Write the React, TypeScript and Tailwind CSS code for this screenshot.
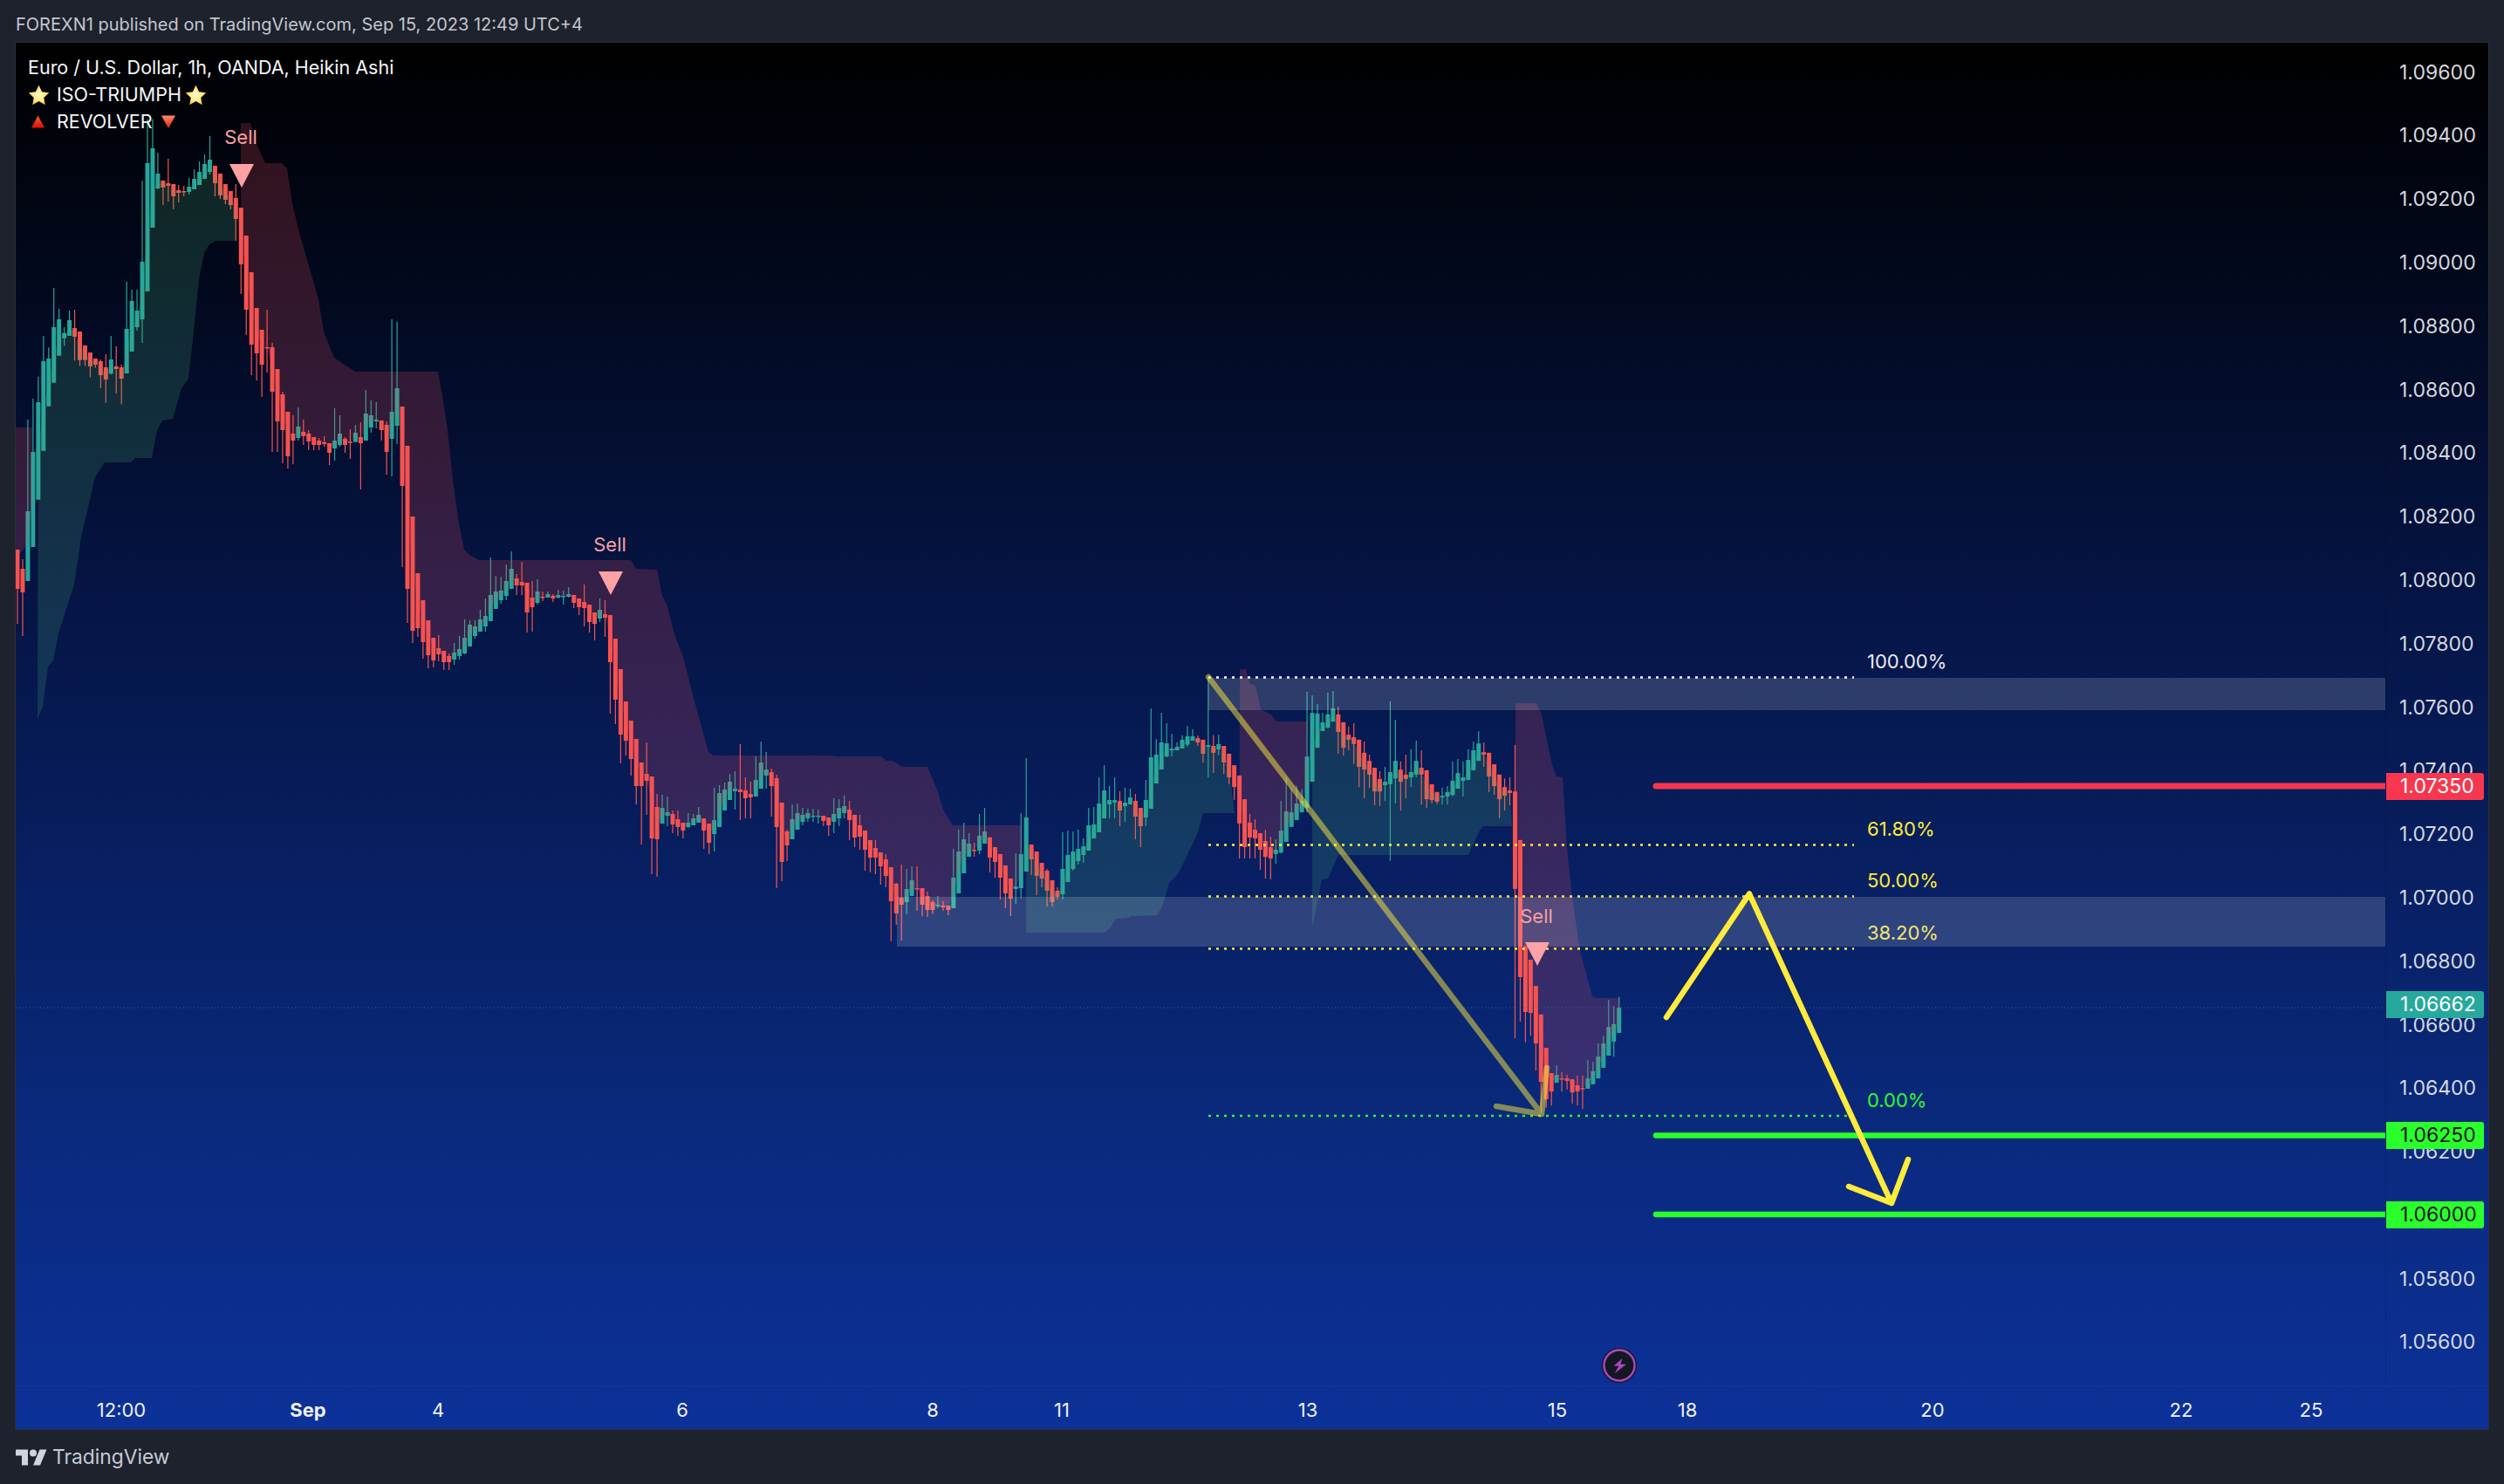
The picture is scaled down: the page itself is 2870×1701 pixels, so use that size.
import React from "react";

type Row = [number, number, number, number, number?];
const seg = (y0: number, s: number, rows: Row[]) =>
  rows.map(([t, b, wt, wb, g]) => ({ t: y0 + t / s, b: y0 + b / s, wt: y0 + wt / s, wb: y0 + wb / s, g: !!g }));

const candles = [
  ...seg(0, 1, [
    [630, 675, 630, 715],
    [652, 679, 641, 729],
    [586, 666, 481, 666, 1],
  ]),
  ...seg(130, 3, [
    [1164, 1491, 981, 1491, 1], [993, 1328, 905, 1328, 1], [852, 1160, 765, 1160, 1], [843, 1007, 805, 1007, 1],
    [735, 926, 600, 926, 1], [708, 833, 672, 833, 1], [755, 773, 735, 800, 1], [711, 765, 678, 765, 1],
    [738, 768, 675, 850], [750, 848, 750, 868], [798, 848, 798, 868], [822, 870, 822, 908],
    [843, 864, 843, 875], [852, 900, 846, 945], [873, 915, 828, 995], [846, 895, 765, 898, 1],
    [870, 879, 801, 963], [873, 912, 864, 1000], [741, 894, 579, 894, 1], [645, 819, 606, 819, 1],
    [678, 735, 606, 747, 1], [510, 708, 231, 789, 1], [171, 612, 20, 612, 1], [120, 393, 20, 393, 1],
    [207, 258, 135, 261, 1], [231, 255, 231, 315], [240, 249, 156, 303], [243, 285, 243, 330],
    [264, 273, 246, 306], [267, 270, 249, 285], [252, 270, 222, 279, 1], [225, 261, 192, 261, 1],
    [201, 246, 165, 246, 1], [174, 225, 141, 225, 1], [159, 201, 78, 210, 1], [180, 240, 180, 285],
    [207, 282, 207, 294], [243, 297, 243, 312], [267, 315, 267, 330], [291, 363, 243, 438],
    [324, 519, 324, 621], [420, 675, 420, 762], [546, 795, 546, 900], [669, 825, 669, 918],
    [744, 864, 744, 975], [804, 807, 675, 891], [804, 957, 789, 1164], [879, 1059, 879, 1164],
    [966, 1089, 957, 1203], [1026, 1179, 1026, 1221], [1101, 1125, 1038, 1206], [1077, 1116, 1011, 1125, 1],
    [1095, 1110, 1053, 1140], [1101, 1128, 1089, 1158], [1113, 1140, 1113, 1158], [1125, 1140, 1116, 1158],
    [1131, 1137, 1110, 1146], [1134, 1167, 1134, 1209], [1125, 1152, 1014, 1194, 1], [1101, 1140, 1038, 1146, 1],
    [1119, 1140, 1113, 1167], [1128, 1133, 1086, 1188],
  ]),
  ...seg(350, 3, [
    [438, 470, 411, 470, 1], [453, 474, 402, 633], [372, 465, 291, 465, 1], [378, 420, 327, 438, 1],
    [393, 399, 333, 423, 1], [396, 429, 396, 465], [411, 504, 399, 582], [366, 459, 48, 588, 1],
    [285, 414, 57, 477, 1], [348, 621, 348, 900], [483, 975, 483, 1092], [726, 1119, 726, 1161],
    [921, 1110, 921, 1140], [1014, 1158, 1014, 1215], [1083, 1203, 1083, 1248], [1143, 1221, 1143, 1245],
    [1179, 1200, 1134, 1224], [1188, 1227, 1188, 1254], [1206, 1227, 1197, 1254], [1194, 1218, 1161, 1236, 1],
    [1182, 1206, 1137, 1218, 1], [1143, 1197, 1080, 1200, 1], [1098, 1173, 1083, 1173, 1], [1104, 1137, 1083, 1146, 1],
    [1080, 1122, 1047, 1122, 1], [1068, 1104, 1008, 1122, 1], [996, 1086, 867, 1086, 1], [984, 1044, 930, 1044, 1],
    [981, 1014, 933, 1026, 1], [948, 999, 891, 1014, 1], [906, 975, 846, 975, 1], [939, 963, 924, 996],
    [951, 963, 882, 996], [954, 1056, 954, 1125], [1005, 1038, 948, 1122], [984, 1023, 942, 1029, 1],
    [1002, 1005, 984, 1017], [993, 1005, 984, 1005, 1], [999, 1008, 993, 1020], [996, 1005, 978, 1008, 1],
    [999, 1002, 981, 1029, 1], [993, 1002, 969, 1005, 1], [996, 1023, 996, 1041], [1008, 1038, 1008, 1065],
    [1020, 1041, 960, 1104], [1029, 1089, 1029, 1125], [1056, 1095, 1056, 1152], [1047, 1077, 1008, 1089, 1],
    [1062, 1074, 1014, 1140],
  ]),
  ...seg(620, 3, [
    [255, 417, 255, 594], [336, 546, 336, 630], [441, 666, 441, 765], [552, 687, 552, 738],
    [618, 750, 618, 807], [681, 843, 681, 906], [762, 843, 762, 1044], [801, 825, 693, 942],
    [810, 1023, 810, 1146], [915, 1026, 870, 1155], [918, 972, 873, 972, 1], [933, 945, 879, 981, 1],
    [939, 975, 927, 1005], [957, 984, 927, 1014], [969, 996, 969, 1023], [969, 984, 936, 987, 1],
    [954, 978, 939, 978, 1], [942, 969, 915, 969, 1], [954, 996, 954, 1059], [972, 1038, 972, 1077],
    [960, 1008, 849, 1068, 1], [867, 984, 840, 984, 1], [855, 927, 831, 927, 1], [828, 891, 801, 891, 1],
    [852, 861, 792, 924, 1], [855, 864, 699, 960], [858, 885, 813, 954], [870, 882, 828, 954],
    [822, 879, 741, 879, 1], [762, 852, 690, 852, 1], [786, 807, 726, 852, 1], [795, 843, 783, 948],
    [816, 984, 804, 1194], [900, 1104, 900, 1170], [999, 1047, 993, 1101], [957, 1026, 906, 1026, 1],
    [936, 993, 903, 993, 1], [942, 966, 918, 978, 1], [936, 954, 921, 966, 1], [945, 948, 921, 966, 1],
    [945, 948, 924, 972, 1], [945, 963, 945, 981], [951, 978, 951, 1014], [939, 966, 885, 1005, 1],
    [918, 954, 888, 981, 1], [912, 936, 876, 954, 1], [924, 960, 894, 1029], [942, 1020, 942, 1053],
    [978, 1017, 942, 1062], [996, 1062, 996, 1134], [1029, 1089, 1029, 1140], [1056, 1089, 1029, 1146],
    [1071, 1119, 1071, 1182], [1095, 1152, 1077, 1191], [1122, 1239, 1122, 1377], [1179, 1281, 1176, 1320],
    [1227, 1251, 1113, 1374], [1197, 1242, 1128, 1284, 1], [1167, 1221, 1119, 1221, 1], [1194, 1197, 1119, 1272],
    [1194, 1251, 1194, 1290], [1221, 1269, 1206, 1293], [1242, 1269, 1236, 1284], [1251, 1257, 1221, 1263, 1],
    [1254, 1260, 1239, 1272], [1254, 1269, 1254, 1287], [1158, 1263, 1059, 1263, 1], [1068, 1212, 993, 1212, 1],
    [1026, 1143, 969, 1143, 1], [1041, 1086, 1005, 1086, 1], [1062, 1065, 1038, 1086], [1014, 1065, 939, 1077, 1],
    [999, 1041, 918, 1041, 1], [1020, 1089, 1017, 1140], [1053, 1104, 1053, 1158], [1077, 1158, 1077, 1233],
    [1116, 1212, 1116, 1263], [1161, 1230, 1161, 1290], [1188, 1197, 1074, 1248, 1], [1077, 1194, 936, 1230, 1],
    [951, 1137, 747, 1137, 1], [1044, 1095, 1044, 1149], [1068, 1152, 1068, 1218], [1107, 1161, 1107, 1191],
    [1134, 1203, 1128, 1257], [1167, 1242, 1167, 1257], [1203, 1224, 1191, 1233], [1128, 1215, 1002, 1233, 1],
    [1080, 1173, 996, 1173, 1], [1068, 1128, 999, 1134, 1], [1059, 1101, 993, 1113, 1], [1050, 1080, 1023, 1107, 1],
    [978, 1065, 918, 1065, 1], [975, 1023, 915, 1023, 1], [903, 1002, 813, 1002, 1], [858, 954, 771, 954, 1],
    [891, 906, 843, 954, 1], [891, 900, 813, 954, 1], [894, 927, 861, 981], [900, 912, 849, 966, 1],
    [882, 906, 852, 906, 1], [894, 948, 870, 1026], [918, 981, 918, 1053], [891, 951, 822, 981, 1],
    [744, 921, 576, 921, 1], [735, 834, 681, 834, 1], [693, 786, 591, 786, 1], [696, 741, 627, 744, 1],
    [714, 720, 663, 741, 1],
  ]),
  ...seg(740, 2.8, [
    [325, 336, 310, 336, 1], [302, 330, 288, 330, 1], [291, 318, 258, 325, 1], [291, 305, 268, 305, 1],
    [297, 311, 288, 322], [302, 347, 302, 375], [319, 325, 100, 423, 1], [322, 344, 287, 409],
    [316, 333, 286, 352, 1], [322, 375, 322, 412], [347, 423, 347, 445], [384, 454, 384, 495],
    [417, 571, 417, 683], [493, 647, 493, 683], [568, 616, 540, 683], [591, 619, 557, 683],
    [602, 655, 602, 720], [627, 678, 591, 748], [647, 683, 614, 750], [655, 669, 622, 700, 1],
    [594, 664, 498, 667, 1], [532, 630, 423, 630, 1], [535, 582, 458, 582, 1], [507, 560, 450, 560, 1],
    [498, 535, 461, 535, 1], [356, 520, 148, 535, 1], [216, 437, 160, 437, 1], [218, 328, 188, 328, 1],
    [246, 274, 216, 274, 1], [221, 263, 151, 266, 1], [202, 244, 146, 244, 1], [221, 277, 196, 347],
    [246, 328, 246, 353], [286, 302, 260, 336], [294, 316, 249, 380], [302, 389, 302, 454],
    [344, 398, 308, 490], [370, 414, 350, 457], [392, 468, 392, 512], [428, 468, 403, 515],
    [437, 448, 389, 498, 1], [406, 445, 179, 691, 1], [370, 426, 238, 507, 1], [398, 437, 372, 529],
    [414, 428, 350, 490], [406, 423, 333, 454, 1], [370, 414, 305, 423, 1], [392, 414, 336, 510],
    [400, 493, 400, 521], [445, 496, 445, 507], [470, 501, 470, 509], [482, 487, 456, 510, 1],
    [470, 484, 451, 510, 1], [434, 479, 372, 484, 1], [409, 459, 364, 459, 1], [423, 434, 372, 484, 1],
    [367, 431, 333, 431, 1], [336, 400, 308, 400, 1], [314, 370, 275, 370, 1], [342, 350, 311, 389],
    [344, 420, 344, 470], [381, 451, 381, 479], [414, 493, 414, 554], [454, 482, 426, 529],
    [465, 473, 423, 512], [468, 781, 319, 1260], [624, 1064, 624, 1207], [965, 1176, 965, 1273],
    [1008, 1179, 1008, 1252], [1092, 1277, 1092, 1364], [1184, 1400, 1184, 1500], [1291, 1456, 1291, 1483],
    [1372, 1431, 1372, 1476], [1378, 1403, 1347, 1403, 1], [1389, 1392, 1369, 1431], [1389, 1397, 1378, 1425],
    [1392, 1434, 1392, 1470], [1411, 1431, 1380, 1476], [1420, 1422, 1380, 1487], [1389, 1422, 1330, 1422, 1],
    [1366, 1408, 1336, 1408, 1], [1319, 1389, 1277, 1389, 1], [1277, 1355, 1252, 1355, 1], [1224, 1316, 1137, 1316, 1],
    [1215, 1271, 1157, 1319, 1], [1162, 1243, 1127, 1243, 1],
  ]),
];

const cx = (i: number) => 20 + 5.96 * i;
const mids = (a: number, b: number) => {
  const out: number[][] = [];
  for (let i = a; i <= b; i++) out.push([cx(i), (candles[i].t + candles[i].b) / 2]);
  return out;
};
const pts = (p: number[][]) => p.map((q) => q.join(",")).join(" ");

const redStops1 = [
  [276, 141], [287, 141], [293, 163], [304, 187], [323, 187], [329, 193], [335, 233], [342, 263], [365, 343],
  [371, 380], [383, 410], [407, 426], [502, 426], [507, 453], [513, 493], [519, 550], [526, 600], [532, 630],
  [538, 636], [549, 642], [723, 642], [729, 652], [753, 653], [759, 683], [765, 695], [773, 727], [783, 753],
  [795, 800], [804, 833], [812, 862], [817, 866], [954, 866], [958, 867], [1009, 867], [1016, 872], [1023, 872],
  [1034, 879], [1063, 879], [1069, 893], [1074, 905], [1081, 928], [1092, 946], [1171, 946],
];
const redStops2 = [[1421, 767], [1428, 767], [1432, 783], [1439, 786], [1445, 813], [1457, 819], [1463, 827], [1499, 827]];
const redStops3 = [
  [1737, 806], [1761, 806], [1767, 819], [1779, 877], [1784, 890], [1791, 891], [1796, 972], [1802, 1029],
  [1811, 1090], [1825, 1142], [1830, 1144], [1857, 1144],
];
const greenStops1 = [
  [43, 824], [49, 810], [55, 764], [61, 757], [67, 726], [85, 670], [93, 616], [109, 547], [120, 530], [150, 530],
  [155, 525], [174, 525], [180, 493], [186, 482], [198, 480], [208, 445], [216, 434], [222, 380], [228, 320],
  [234, 290], [240, 280], [247, 276], [270, 276],
];
const greenStops2 = [
  [1176, 1069], [1266, 1069], [1273, 1063], [1279, 1053], [1293, 1052], [1297, 1050], [1326, 1049], [1333, 1037],
  [1340, 1012], [1350, 1002], [1358, 986], [1373, 954], [1379, 932], [1415, 932],
];
const greenStops3 = [
  [1504, 1063], [1515, 1008], [1522, 1007], [1534, 980], [1683, 980], [1696, 952], [1700, 947], [1733, 947],
];

const ribbon = (stops: number[][], a: number, b: number) => pts([...stops, ...mids(a, b).reverse()]);

const prices = [
  "1.09600", "1.09400", "1.09200", "1.09000", "1.08800", "1.08600", "1.08400", "1.08200", "1.08000", "1.07800",
  "1.07600", "1.07400", "1.07200", "1.07000", "1.06800", "1.06600", "1.06400", "1.06200", "1.06000", "1.05800",
  "1.05600",
];
const ticks: [string, number, boolean?][] = [
  ["12:00", 139], ["Sep", 353, true], ["4", 502], ["6", 782], ["8", 1069], ["11", 1217], ["13", 1499], ["15", 1785],
  ["18", 1934], ["20", 2215], ["22", 2500], ["25", 2649],
];
const fibs: [number, string, string, number, string][] = [
  [776.5, "#ffffff", "100.00%", 758, "#e9ebf0"],
  [968.5, "#ffeb3b", "61.80%", 950, "#ffeb3b"],
  [1027.5, "#ffeb3b", "50.00%", 1009, "#ffeb3b"],
  [1087.5, "#ffeb3b", "38.20%", 1069, "#f5e56b"],
  [1279, "#2bff2b", "0.00%", 1261, "#2bff2b"],
];
const sells: [number, number, number, number][] = [
  [276, 157, 277, 188],
  [699, 624, 700, 655],
  [1761, 1050, 1762, 1080],
];

function Star() {
  return (
    <svg width="25" height="24" viewBox="0 0 24 23" className="shrink-0">
      <path
        d="M12 0.5l3.4 7.3 7.9 1-5.8 5.5 1.5 7.9-7-3.9-7 3.9 1.5-7.9L0.7 8.8l7.9-1z"
        fill="url(#star)"
      />
    </svg>
  );
}

function Legend() {
  return (
    <div className="absolute left-[14px] top-[13px] flex flex-col text-[21.5px] text-[#f4f5f7]">
      <svg width="0" height="0" className="absolute">
        <defs>
          <radialGradient id="star" cx="50%" cy="50%" r="60%">
            <stop offset="0%" stopColor="#fff9d6" />
            <stop offset="55%" stopColor="#ffe97a" />
            <stop offset="100%" stopColor="#f5b30f" />
          </radialGradient>
          <linearGradient id="ru" x1="0" y1="0" x2="0" y2="1">
            <stop offset="0%" stopColor="#ff5a3c" />
            <stop offset="100%" stopColor="#e01000" />
          </linearGradient>
          <linearGradient id="rd" x1="0" y1="0" x2="0" y2="1">
            <stop offset="0%" stopColor="#ff8a70" />
            <stop offset="100%" stopColor="#e81c08" />
          </linearGradient>
        </defs>
      </svg>
      <div className="flex h-[31px] items-center">Euro / U.S. Dollar, 1h, OANDA, Heikin Ashi</div>
      <div className="flex h-[31px] items-center">
        <Star />
        <span className="ml-[8px] mr-[4px]">ISO-TRIUMPH</span>
        <Star />
      </div>
      <div className="flex h-[31px] items-center">
        <svg width="23" height="15" viewBox="0 0 23 15" className="shrink-0">
          <path d="M11.5 0.5L19 14.5H4z" fill="url(#ru)" />
        </svg>
        <span className="ml-[10px] mr-[10px]">REVOLVER</span>
        <svg width="16" height="15" viewBox="0 0 16 15" className="shrink-0">
          <path d="M0 0.5H16L8 15z" fill="url(#rd)" />
        </svg>
      </div>
    </div>
  );
}

function Chart() {
  return (
    <svg width="2716" height="1539" viewBox="18 49 2716 1539" className="block">
      {candles.map((c, i) => {
        const x = cx(i);
        const col = c.g ? "#26a69a" : "#f7534f";
        return (
          <g key={i} fill={col}>
            <rect x={x - 0.6} y={c.wt} width={1.2} height={Math.max(c.wb - c.wt, 1)} />
            <rect x={x - 2.5} y={c.t} width={5} height={Math.max(c.b - c.t, 1.5)} />
          </g>
        );
      })}

      <polygon points="18,490 37,490 37,570 31,625 18,640" fill="#f7525f" fillOpacity={0.2} />
      <polygon points={ribbon(redStops1, 43, 193)} fill="#f7525f" fillOpacity={0.2} />
      <polygon points={ribbon(redStops2, 235, 248)} fill="#f7525f" fillOpacity={0.2} />
      <polygon points={ribbon(redStops3, 288, 308)} fill="#f7525f" fillOpacity={0.2} />
      <polygon points={ribbon(greenStops1, 4, 42)} fill="#4caf7a" fillOpacity={0.2} />
      <polygon points={ribbon(greenStops2, 194, 233)} fill="#4caf7a" fillOpacity={0.2} />
      <polygon points={ribbon(greenStops3, 249, 287)} fill="#4caf7a" fillOpacity={0.2} />

      <rect x={1385} y={777} width={1349} height={37} fill="#ffffff" fillOpacity={0.155} />
      <rect x={1028} y={1028} width={1706} height={57} fill="#ffffff" fillOpacity={0.155} />

      <line x1={18} y1={1155} x2={2734} y2={1155} stroke="#2f72b5" strokeWidth={1} strokeDasharray="1 3" strokeOpacity={0.8} />

      {fibs.map(([y, col, label, ly, tc]) => (
        <g key={label}>
          <line x1={1385} y1={y} x2={2125} y2={y} stroke={col} strokeWidth={2.5} strokeDasharray="3 6" />
          <text x={2140} y={ly} dominantBaseline="central" fontSize={22} fill={tc} fontFamily="Inter, sans-serif">
            {label}
          </text>
        </g>
      ))}

      <line x1={1898} y1={901} x2={2740} y2={901} stroke="#f7374f" strokeWidth={7} strokeLinecap="round" />
      <line x1={1898} y1={1301.5} x2={2740} y2={1301.5} stroke="#2bff2b" strokeWidth={6.5} strokeLinecap="round" />
      <line x1={1898} y1={1392} x2={2740} y2={1392} stroke="#2bff2b" strokeWidth={6.5} strokeLinecap="round" />

      <path
        d="M1385 776L1767 1277M1715 1268L1767 1277L1773 1224"
        fill="none"
        stroke="#ffeb3b"
        strokeOpacity={0.5}
        strokeWidth={6.5}
        strokeLinecap="round"
        strokeLinejoin="round"
      />
      <path
        d="M1910 1166L2005 1024.5L2168 1379M2119 1360L2168 1379L2187 1329"
        fill="none"
        stroke="#ffeb3b"
        strokeWidth={6.5}
        strokeLinecap="round"
        strokeLinejoin="round"
      />

      {sells.map(([tx, ty, mx, my]) => (
        <g key={tx}>
          <text x={tx} y={ty} textAnchor="middle" dominantBaseline="central" fontSize={22} fill="#f7a0a4" fontFamily="Inter, sans-serif">
            Sell
          </text>
          <polygon points={`${mx - 14},${my} ${mx + 14},${my} ${mx},${my + 27}`} fill="#ffa2a6" />
        </g>
      ))}

      <circle cx={1856} cy={1565} r={20} fill="#131722" />
      <circle cx={1856} cy={1565} r={17.5} fill="none" stroke="#ab47bc" strokeWidth={2.4} />
      <path d="M1859.5 1557L1849.5 1565.7H1855.3L1850.7 1574.3L1864 1563.7H1857.3z" fill="#ab47bc" />
    </svg>
  );
}

function Tag({ y, bg, fg, text }: { y: string; bg: string; fg: string; text: string }) {
  return (
    <div className={`absolute left-0 flex h-[31px] w-[112px] items-center rounded-r-[3px] pl-[16px] text-[23px] ${y} ${bg} ${fg}`}>
      {text}
    </div>
  );
}

export default function App() {
  return (
    <div className="flex h-[1701px] w-[2870px] flex-col overflow-hidden bg-[#1e222d] font-['Inter',sans-serif]">
      <header className="flex h-[48px] items-center pl-[18px] pt-[8px] text-[20px] text-[#c3c6cf]">
        FOREXN1 published on TradingView.com, Sep 15, 2023 12:49 UTC+4
      </header>

      <main className="ml-[17px] flex h-[1591px] w-[2836px] flex-col border border-[#2a2e39] bg-[linear-gradient(to_bottom,#000000_0%,#051546_41%,#0a2a7e_79%,#0c3199_100%)]">
        <div className="flex h-[1539px]">
          <div className="relative h-[1539px] w-[2716px] overflow-hidden">
            <Chart />
            <Legend />
          </div>
          <div className="relative h-[1539px] w-[118px] overflow-hidden border-l border-[#00000022]">
            <div className="-mt-[2.6px] flex flex-col pl-[15px] text-[23px] text-[#d5d8df]">
              {prices.map((p) => (
                <div key={p} className="flex h-[72.8px] shrink-0 items-center">
                  {p}
                </div>
              ))}
            </div>
            <Tag y="top-[837px]" bg="bg-[#f7374f]" fg="text-white" text="1.07350" />
            <Tag y="top-[1087px]" bg="bg-[#27a89c]" fg="text-white" text="1.06662" />
            <Tag y="top-[1237px]" bg="bg-[#2bff2b]" fg="text-[#131722]" text="1.06250" />
            <Tag y="top-[1328px]" bg="bg-[#2bff2b]" fg="text-[#131722]" text="1.06000" />
          </div>
        </div>
        <div className="relative h-[50px] border-t border-[#ffffff08] text-[22px] text-[#eef0f4]">
          {ticks.map(([t, x, bold]) => (
            <span
              key={t}
              className={`absolute top-[11px] -translate-x-1/2 ${bold ? "font-bold" : ""}`}
              style={{ left: x - 18 }}
            >
              {t}
            </span>
          ))}
        </div>
      </main>

      <footer className="flex flex-1 items-center gap-[6px] pl-[18px]">
        <svg width="36" height="20" viewBox="0 0 36 19" className="shrink-0">
          <path d="M14 19H7V8H0V1h14zM28 19h-8l7.5-18h8z" fill="#d1d4dc" />
          <circle cx="20" cy="5" r="4" fill="#d1d4dc" />
        </svg>
        <span className="text-[22.8px] text-[#c8cbd4]">TradingView</span>
      </footer>
    </div>
  );
}
